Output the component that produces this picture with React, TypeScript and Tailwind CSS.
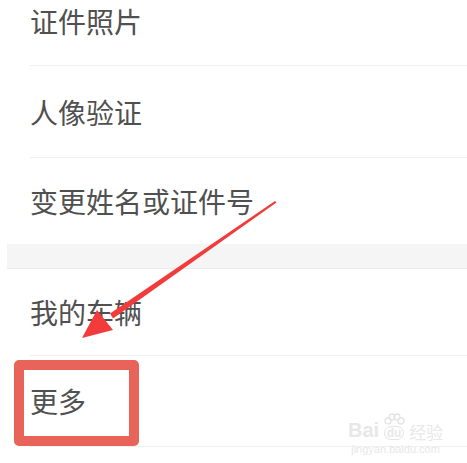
const Arrow: React.FC = () => (
  <svg className="absolute left-0 top-0 pointer-events-none" width="467" height="463" viewBox="0 0 467 463">
    <polygon points="275,201 276.5,202.5 113,318.5 110,313.5" fill="#f23c3c" />
    <polygon points="82,338 97,310 113,330" fill="#f23c3c" />
  </svg>
);

const Watermark: React.FC = () => (
  <div className="absolute left-[348px] top-[413px] flex flex-col items-center text-[#e8e8e8] select-none">
    <div className="flex items-end gap-[2px] leading-none">
      <span className="text-[20px] font-bold font-['Liberation_Sans',sans-serif]">Bai</span>
      <span className="relative flex flex-col items-center">
        <svg width="26" height="14" viewBox="0 0 26 14" className="-mb-[1px]">
          <circle cx="7" cy="8" r="3" fill="none" stroke="#e4e4e4" strokeWidth="1.3" />
          <circle cx="11" cy="4" r="3" fill="none" stroke="#e4e4e4" strokeWidth="1.3" />
          <circle cx="16" cy="4" r="3" fill="none" stroke="#e4e4e4" strokeWidth="1.3" />
          <circle cx="20" cy="8" r="3" fill="none" stroke="#e4e4e4" strokeWidth="1.3" />
        </svg>
        <span className="rounded-[8px] border border-[#e4e4e4] px-[2px] text-[12px] font-bold font-['Liberation_Sans',sans-serif]">du</span>
      </span>
      <span className="text-[17px] font-['Noto_Sans_CJK_SC',sans-serif]">经验</span>
    </div>
    <span className="text-[11px] leading-none mt-[4px] font-['Liberation_Sans',sans-serif]">jingyan.baidu.com</span>
  </div>
);

export default function App() {
  return (
    <div className="relative w-[467px] h-[463px] overflow-hidden bg-white font-['Noto_Sans_CJK_SC',sans-serif] text-[28px] text-[#505050]">
      <div className="flex flex-col pl-[7px]">
        <div className="flex flex-col pl-[23px]">
          <div className="h-[66px] pt-[7px] border-b border-[#f0f0f0]">
            <span className="block leading-none">证件照片</span>
          </div>
          <div className="h-[92px] flex items-center border-b border-[#f0f0f0]">
            <span className="leading-none">人像验证</span>
          </div>
          <div className="h-[86px] flex items-center">
            <span className="leading-none">变更姓名或证件号</span>
          </div>
        </div>
        <div className="h-[25px] bg-[#f5f5f5] border-b border-[#ececec]" />
        <div className="flex flex-col pl-[23px]">
          <div className="h-[87px] flex items-center border-b border-[#f0f0f0]">
            <span className="leading-none">我的车辆</span>
          </div>
          <div className="h-[91px] flex items-center border-b border-[#f0f0f0]">
            <span className="leading-none">更多</span>
          </div>
        </div>
      </div>
      <div className="absolute left-[14px] top-[360px] w-[125px] h-[86px] border-[10px] border-[#e8635a] rounded-[5px]" />
      <Arrow />
      <Watermark />
    </div>
  );
}
